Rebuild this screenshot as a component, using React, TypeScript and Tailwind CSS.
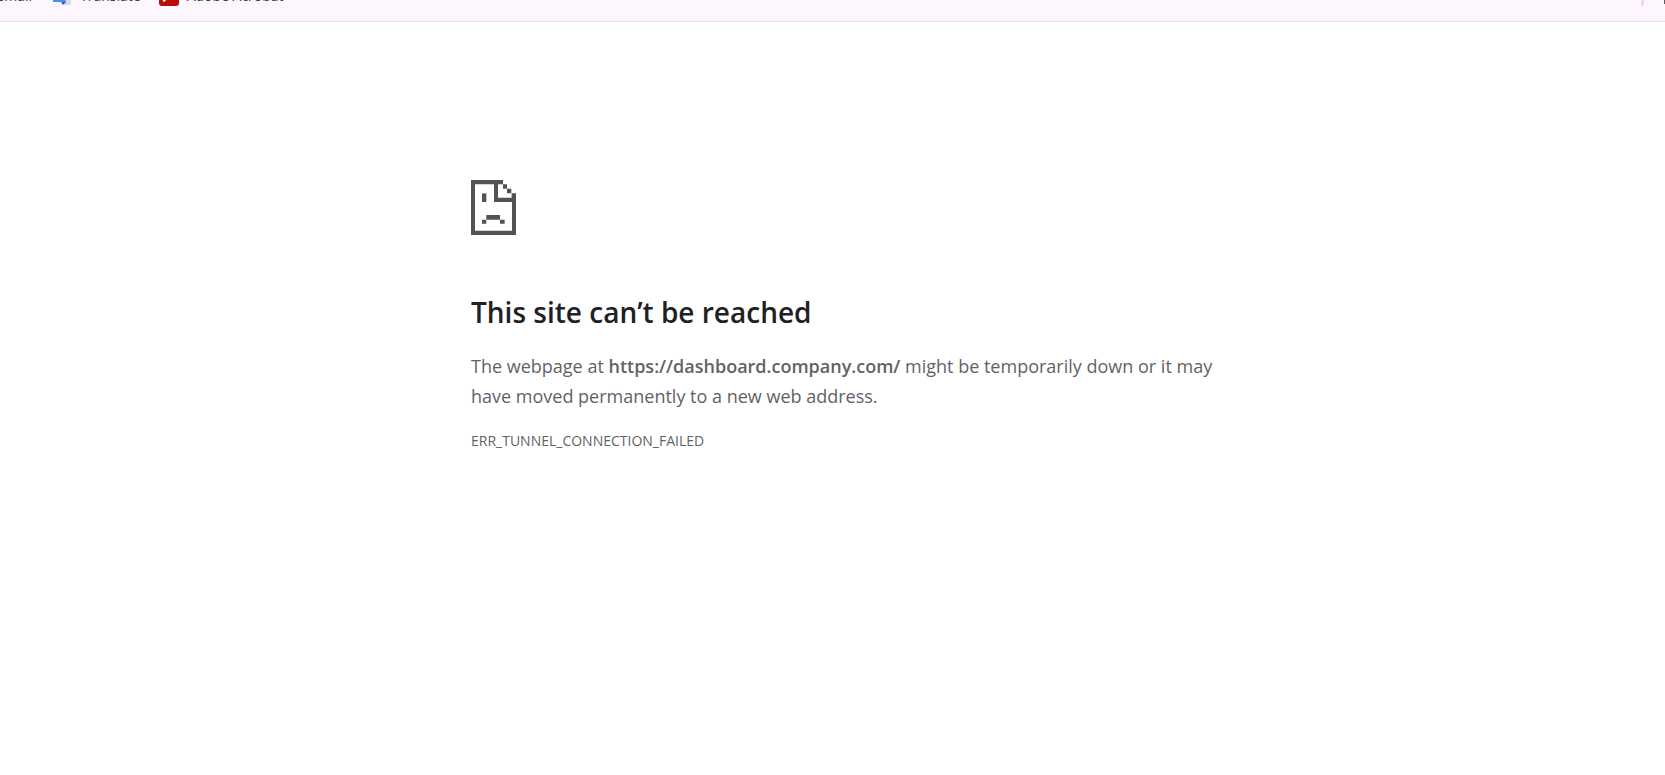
import React from "react";

const SadPageIcon: React.FC = () => (
  <svg className="w-[45px] h-[55px]" viewBox="0 0 135 165" fill="#535353" aria-hidden="true">
    <path d="M0 0H96V13H81V53H122V40H135V165H0ZM12 13V152H123V66H69V13Z" fillRule="evenodd" />
    <path d="M96 13H108V26H96ZM108 26H121V40H108Z" />
    <path d="M33 40H46V66H33Z" />
    <path d="M46 105H87V119H46ZM33 119H46V131H33ZM87 119H101V131H87Z" />
  </svg>
);

const TranslateIcon: React.FC = () => (
  <svg className="w-5 h-5" viewBox="0 0 20 20" aria-hidden="true">
    <path d="M8 5H18Q19 5 19 6V18Q19 19 18 19H12Z" fill="#dadce0" />
    <path d="M1 1H9L14 16H2Q1 16 1 15Z" fill="#4c8df6" />
    <path d="M9 16H14L11 19Z" fill="#3554c4" />
  </svg>
);

const AcrobatIcon: React.FC = () => (
  <svg className="w-5 h-5" viewBox="0 0 20 20" aria-hidden="true">
    <rect width="20" height="20" rx="3" fill="#b90d05" />
    <path d="M4 15C8 13 10 8 10 4C10 10 13 12 17 12C12 11 8 12 5 15Z" fill="none" stroke="#fff" strokeWidth="1.5" />
  </svg>
);

const BookmarksBar: React.FC = () => (
  <nav className="flex items-end justify-between h-[22px] overflow-hidden bg-[#fdf6ff] border-b border-[#e2dfe8] text-sm leading-5 text-[#3c3a42]">
    <div className="flex items-end pb-[15px]">
      <a href="#gmail" className="w-8 h-5 flex justify-end">Gmail</a>
      <a href="#translate" className="ml-5 flex gap-2">
        <TranslateIcon />
        Translate
      </a>
      <a href="#acrobat" className="ml-[18px] flex gap-2">
        <AcrobatIcon />
        Adobe Acrobat
      </a>
    </div>
    <div className="flex items-end gap-5 pb-[15px]">
      <div className="w-[3px] h-5 rounded-b-sm bg-[#ead9fb]" />
      <div className="w-px h-5 mb-0.5 bg-[#5c5960]" />
    </div>
  </nav>
);

const App: React.FC = () => {
  return (
    <div className="min-h-screen bg-white font-['Open_Sans','Noto_Sans',sans-serif]">
      <BookmarksBar />
      <div className="pl-[27px]">
        <main className="max-w-[750px] mx-auto pt-[158px] text-[#5f6368]">
          <SadPageIcon />
          <h1 className="mt-[57px] text-[28px] leading-10 font-semibold text-[#202124]">
            This site can’t be reached
          </h1>
          <p className="mt-[19px] text-lg leading-[30px]">
            The webpage at <strong className="font-semibold">https://dashboard.company.com/</strong> might be temporarily down or it may have moved permanently to a new web address.
          </p>
          <p className="mt-[15px] text-sm leading-[30px]">ERR_TUNNEL_CONNECTION_FAILED</p>
        </main>
      </div>
    </div>
  );
};

export default App;
